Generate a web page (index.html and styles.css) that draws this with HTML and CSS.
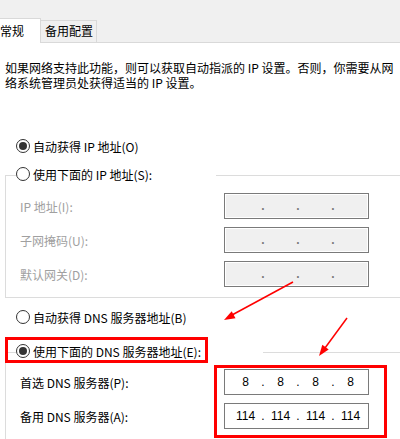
FILE: index.html
```html
<!DOCTYPE html>
<html lang="zh-CN">
<head>
    <meta charset="UTF-8">
    <meta name="viewport" content="width=device-width, initial-scale=1.0">
    <title>Internet 协议版本 4 (TCP/IPv4) 属性</title>
    <link rel="stylesheet" href="styles.css">
</head>
<body>

    <div class="dialog">
        <!-- Tabs -->
        <div class="tabs">
            <div class="tab tab-active">常规</div>
            <div class="tab">备用配置</div>
        </div>

        <div class="page">
            <p class="intro">如果网络支持此功能，则可以获取自动指派的 IP 设置。否则，你需要从网<br>络系统管理员处获得适当的 IP 设置。</p>

            <div class="option option-ip"><span class="radio checked"></span>自动获得 IP 地址(O)</div>

            <!-- Manual IP group (disabled) -->
            <div class="group group-ip">
                <div class="legend legend-ip"><span class="radio"></span>使用下面的 IP 地址(S):</div>
                <div class="field field-first disabled">
                    <label>IP 地址(I):</label>
                    <div class="ipbox"><span class="oct"></span><i class="dot">.</i><span class="oct"></span><i class="dot">.</i><span class="oct"></span><i class="dot">.</i><span class="oct"></span></div>
                </div>
                <div class="field disabled">
                    <label>子网掩码(U):</label>
                    <div class="ipbox"><span class="oct"></span><i class="dot">.</i><span class="oct"></span><i class="dot">.</i><span class="oct"></span><i class="dot">.</i><span class="oct"></span></div>
                </div>
                <div class="field disabled">
                    <label>默认网关(D):</label>
                    <div class="ipbox"><span class="oct"></span><i class="dot">.</i><span class="oct"></span><i class="dot">.</i><span class="oct"></span><i class="dot">.</i><span class="oct"></span></div>
                </div>
            </div>

            <div class="option option-dns"><span class="radio"></span>自动获得 DNS 服务器地址(B)</div>

            <!-- Manual DNS group -->
            <div class="group group-dns">
                <div class="legend legend-dns"><span class="radio checked"></span>使用下面的 DNS 服务器地址(E):</div>
                <div class="field">
                    <label>首选 DNS 服务器(P):</label>
                    <div class="ipbox"><span class="oct">8</span><i class="dot">.</i><span class="oct">8</span><i class="dot">.</i><span class="oct">8</span><i class="dot">.</i><span class="oct">8</span></div>
                </div>
                <div class="field">
                    <label>备用 DNS 服务器(A):</label>
                    <div class="ipbox"><span class="oct">114</span><i class="dot">.</i><span class="oct">114</span><i class="dot">.</i><span class="oct">114</span><i class="dot">.</i><span class="oct">114</span></div>
                </div>
            </div>
        </div>

        <!-- Red annotations drawn over the screenshot -->
        <div class="mark mark-radio"></div>
        <div class="mark mark-inputs"></div>
        <svg class="arrows" width="400" height="439" viewBox="0 0 400 439">
            <line x1="293" y1="282" x2="232" y2="315" stroke="#ff0000" stroke-width="1.5"/>
            <polygon points="224,320 235.5,318.2 231.7,311.2" fill="#ff0000"/>
            <line x1="347" y1="318" x2="325" y2="348" stroke="#ff0000" stroke-width="1.5"/>
            <polygon points="319,356 328.7,349.5 322.3,344.7" fill="#ff0000"/>
        </svg>
    </div>

</body>
</html>
```

FILE: styles.css
```css
body {
    margin: 0;
    background-color: #ffffff;
    font-family: "Noto Sans CJK SC", "Noto Sans", sans-serif;
    font-size: 12px;
    color: #000000;
}
.dialog {
    position: relative;
    width: 400px;
    height: 439px;
    overflow: hidden;
    background-color: #ffffff;
}

/* tabs */
.tabs {
    display: flex;
    align-items: flex-end;
    height: 42px;
    background-color: #f0f0f0;
    border-bottom: 1px solid #d9d9d9;
}
.tab {
    height: 22px;
    line-height: 20px;
    padding: 0 3px 0 4px;
    border: 1px solid #d9d9d9;
    border-left: none;
    border-bottom: none;
    box-sizing: border-box;
    white-space: nowrap;
}
.tab-active {
    height: 25px;
    line-height: 24px;
    margin-left: -8px;
    margin-bottom: -1px;
    padding: 0 16px 0 8px;
    background-color: #ffffff;
}

/* page */
.page {
    padding-left: 5px;
}
.intro {
    margin: 17px 0 0;
    line-height: 15px;
    white-space: nowrap;
}
.option, .legend {
    display: flex;
    align-items: center;
    height: 20px;
    white-space: nowrap;
}
.option {
    padding-left: 11px;
}
.option-ip {
    margin-top: 46px;
}
.option-dns {
    margin-top: 9px;
}
.radio {
    position: relative;
    width: 14px;
    height: 14px;
    margin-right: 3px;
    border: 1px solid #333333;
    border-radius: 50%;
    box-sizing: border-box;
    background-color: #ffffff;
}
.radio.checked::after {
    content: "";
    position: absolute;
    left: 2px;
    top: 2px;
    width: 8px;
    height: 8px;
    border-radius: 50%;
    background-color: #333333;
}

/* group boxes */
.group {
    border-top: 1px solid #dcdcdc;
    border-left: 1px solid #dcdcdc;
    border-bottom: 1px solid #dcdcdc;
    padding-bottom: 10px;
}
.group-ip {
    margin-top: 19px;
}
.group-dns {
    margin-top: 25px;
    padding-bottom: 20px;
}
.legend {
    margin: -12px 0 0 10px;
    background-color: #ffffff;
}
.legend-ip {
    width: 200px;
}
.legend-dns {
    width: 247px;
}
.field {
    display: grid;
    grid-template-columns: 204px 145px;
    align-items: center;
    height: 26px;
    margin-top: 8px;
    padding-left: 14px;
    white-space: nowrap;
}
.field-first {
    margin-top: 9px;
}
.field.disabled label {
    color: #a0a0a0;
}

/* ip address control */
.ipbox {
    display: flex;
    align-items: center;
    height: 26px;
    padding: 0 2px 0 5px;
    border: 1px solid #7a7a7a;
    box-sizing: border-box;
    background-color: #ffffff;
    font-family: "Liberation Sans", Arial, sans-serif;
    font-size: 12px;
}
.ipbox .oct {
    width: 31px;
    text-align: center;
}
.ipbox .dot {
    width: 4px;
    font-style: normal;
    text-align: center;
}
.disabled .ipbox {
    background-color: #f0f0f0;
    box-shadow: inset 0 0 0 1px #ffffff;
    color: #7a7a7a;
    font-weight: bold;
}

/* annotations */
.mark {
    position: absolute;
    border: 3px solid #ff0000;
    box-sizing: border-box;
}
.mark-radio {
    left: 5px;
    top: 337px;
    width: 203px;
    height: 26px;
}
.mark-inputs {
    left: 214px;
    top: 365px;
    width: 173px;
    height: 73px;
}
.arrows {
    position: absolute;
    left: 0;
    top: 0;
}
```
